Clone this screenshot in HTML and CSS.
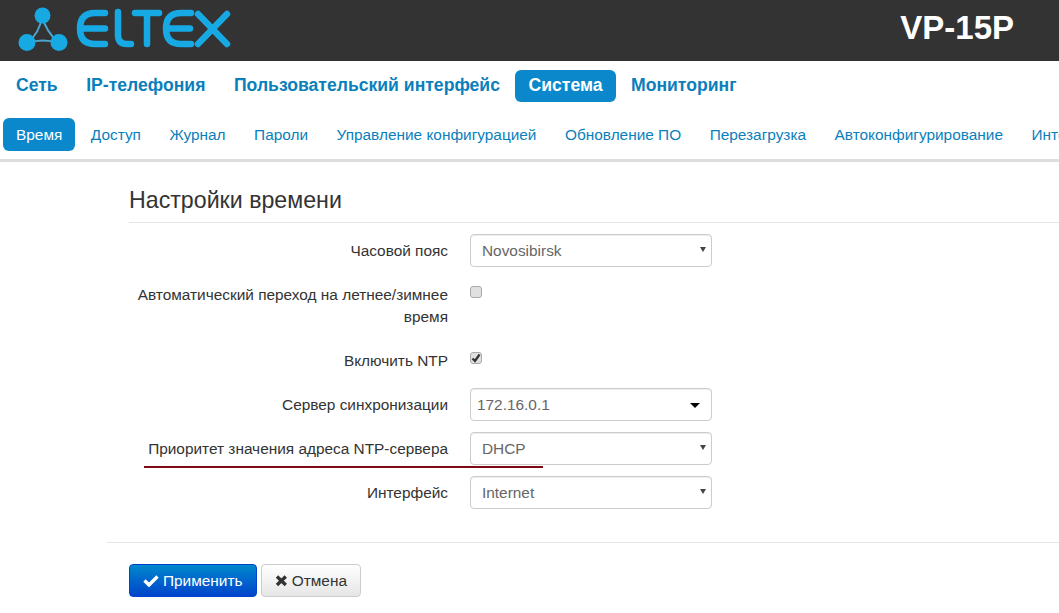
FILE: index.html
```html
<!DOCTYPE html>
<html lang="ru">
<head>
<meta charset="utf-8">
<title>VP-15P</title>
<link rel="stylesheet" href="styles.css">
</head>
<body>
<header class="topbar">
  <svg class="logo" width="216" height="50" viewBox="18 2 216 50" aria-label="ELTEX">
    <path d="M42 16 Q40 33 27 43 Q43 38 59 43 Q46 32 42 16 Z" fill="none" stroke="#4aa6cc" stroke-width="2"/>
    <circle cx="42.500" cy="15.500" r="8" fill="#16a9e3"/>
    <circle cx="27" cy="42.500" r="8.500" fill="#16a9e3"/>
    <circle cx="59" cy="42.500" r="8.500" fill="#16a9e3"/>
    <g fill="none" stroke="#16a9e3" stroke-width="6.500" stroke-linecap="round" stroke-linejoin="round">
      <path d="M105 13 H95 Q80 13 80 28.500 Q80 44 95 44 H105 M84 28.500 H105"/>
      <path d="M118 12 V35 Q118 44 127 44 H131"/>
      <path d="M135 13 H159 M147 14 V44"/>
      <path d="M191 13 H181 Q166 13 166 28.500 Q166 44 181 44 H191 M170 28.500 H190"/>
      <path d="M198 14 L227 44 M227 14 L198 44"/>
    </g>
  </svg>
  <div class="model">VP-15P</div>
</header>
<nav class="nav nav-main">
  <a href="#">Сеть</a>
  <a href="#">IP-телефония</a>
  <a href="#">Пользовательский интерфейс</a>
  <a href="#" class="active">Система</a>
  <a href="#">Мониторинг</a>
</nav>
<nav class="nav nav-sub">
  <a href="#" class="active">Время</a>
  <a href="#">Доступ</a>
  <a href="#">Журнал</a>
  <a href="#">Пароли</a>
  <a href="#">Управление конфигурацией</a>
  <a href="#">Обновление ПО</a>
  <a href="#">Перезагрузка</a>
  <a href="#">Автоконфигурирование</a>
  <a href="#">Интерфейсы</a>
</nav>
<main class="content">
  <form class="form">
    <h1 class="title">Настройки времени</h1>
    <div class="row">
      <label class="label">Часовой пояс</label>
      <div class="select"><span>Novosibirsk</span><i class="arrow"></i></div>
    </div>
    <div class="row row-check row-auto">
      <label class="label">Автоматический переход на летнее/зимнее время</label>
      <span class="check"></span>
    </div>
    <div class="row row-check row-ntp">
      <label class="label">Включить NTP</label>
      <span class="check checked">
        <svg width="10" height="10" viewBox="0 0 10 10"><path d="M1.500 5.500 L4 8 L8.500 1.500" fill="none" stroke="#333" stroke-width="2.200"/></svg>
      </span>
    </div>
    <div class="row">
      <label class="label">Сервер синхронизации</label>
      <div class="select select-combo"><span>172.16.0.1</span><i class="caret"></i></div>
    </div>
    <div class="row">
      <label class="label">Приоритет значения адреса NTP-сервера</label>
      <div class="select"><span>DHCP</span><i class="arrow"></i></div>
      <div class="redline"></div>
    </div>
    <div class="row">
      <label class="label">Интерфейс</label>
      <div class="select"><span>Internet</span><i class="arrow"></i></div>
    </div>
    <div class="actions">
      <button type="button" class="btn btn-primary">
        <svg width="16" height="13" viewBox="0 0 16 13"><path d="M1.500 6.500 L6 11 L14.500 2.500" fill="none" stroke="#fff" stroke-width="3.400"/></svg>Применить</button>
      <button type="button" class="btn btn-default">
        <svg width="13" height="13" viewBox="0 0 13 13"><path d="M2 2.500 L11 11 M11 2.500 L2 11" fill="none" stroke="#333" stroke-width="3.400"/></svg>Отмена</button>
    </div>
  </form>
</main>
</body>
</html>
```
FILE: styles.css
```css
* { box-sizing: border-box; }
html, body { margin: 0; height: 100%; overflow: hidden; background: #fff; }
body { font-family: "Liberation Sans", Arial, sans-serif; color: #333; font-size: 15.4px; }

.topbar {
  height: 61px;
  background: #333;
  display: flex;
  align-items: flex-start;
  justify-content: space-between;
}
.logo { margin: 2px 0 0 18px; flex: none; }
.model { color: #fff; font-weight: bold; font-size: 33px; line-height: 38px; margin: 9px 45px 0 0; }

.nav { display: flex; white-space: nowrap; }
.nav a { color: #0b7fbc; text-decoration: none; border-radius: 6px; flex: none; }
.nav a.active { background: #0a88cb; color: #fff; }
.nav-main { margin-top: 9px; padding-left: 3px; gap: 2.5px; }
.nav-main a { font-weight: bold; font-size: 17.6px; line-height: 30px; height: 32px; padding: 0 13px; }
.nav-sub {
  margin-top: 16px;
  padding: 0 0 8px 3px;
  gap: 2.5px;
  border-bottom: 3px solid #ddd;
  height: 44px;
}
.nav-sub a { font-size: 15.4px; line-height: 33px; height: 33px; padding: 0 13px; }

.content { padding-left: 107px; }
.form { display: block; }
.title {
  font-weight: normal;
  font-size: 23.2px;
  line-height: 30px;
  margin: 23px 0 11px 22px;
  padding-bottom: 7px;
  border-bottom: 1px solid #e5e5e5;
  color: #333;
}
.row { position: relative; display: flex; gap: 22px; align-items: flex-start; margin-bottom: 11px; height: 33px; }
.label { width: 341px; flex: none; text-align: right; line-height: 22px; padding-top: 6px; padding-left: 20px; color: #333; }
.row-auto { height: 44px; margin-top: 17px; margin-bottom: 22px; }
.row-auto .label { padding-top: 0; }
.row-ntp { height: 22px; margin-bottom: 16px; }
.row-ntp .label { padding-top: 0; }

.select {
  position: relative;
  width: 242px;
  height: 33px;
  border: 1px solid #ccc;
  border-radius: 4px;
  line-height: 31px;
  padding-left: 11px;
  color: #666;
  background: #fff;
  box-shadow: inset 0 1px 1px rgba(0,0,0,.075);
}
.select-combo { padding-left: 6px; }
.arrow {
  position: absolute; top: 12px; right: 5px;
  border-left: 3px solid transparent; border-right: 3px solid transparent; border-top: 5px solid #444;
}
.caret {
  position: absolute; top: 14px; right: 11px;
  border-left: 5px solid transparent; border-right: 5px solid transparent; border-top: 5px solid #000;
}
.check {
  flex: none;
  width: 12px; height: 12px;
  border: 1px solid #aaa; border-radius: 3px;
  background: #e0e0e0;
  display: flex; align-items: center; justify-content: center;
}
.check svg { display: block; flex: none; }
.row-auto .check { margin-top: 2px; }
.row-ntp .check { margin-top: 2px; }
.redline { position: absolute; left: 37px; top: 34px; width: 399px; height: 2px; background: #7b0a14; }

.actions { border-top: 1px solid #e5e5e5; margin-top: 33px; padding: 21px 0 0 22px; display: flex; gap: 4px; }
.btn {
  font-family: inherit; font-size: 15.4px; height: 33px; border-radius: 4px; padding: 0 13px;
  display: flex; align-items: center; gap: 4px; cursor: pointer;
}
.btn-primary { color: #fff; width: 128px; border: 1px solid #04c; background: linear-gradient(#08c, #04c); padding: 0 13px; }
.btn-default { color: #333; width: 100px; border: 1px solid #ccc; background: linear-gradient(#fff, #e6e6e6); }
```
